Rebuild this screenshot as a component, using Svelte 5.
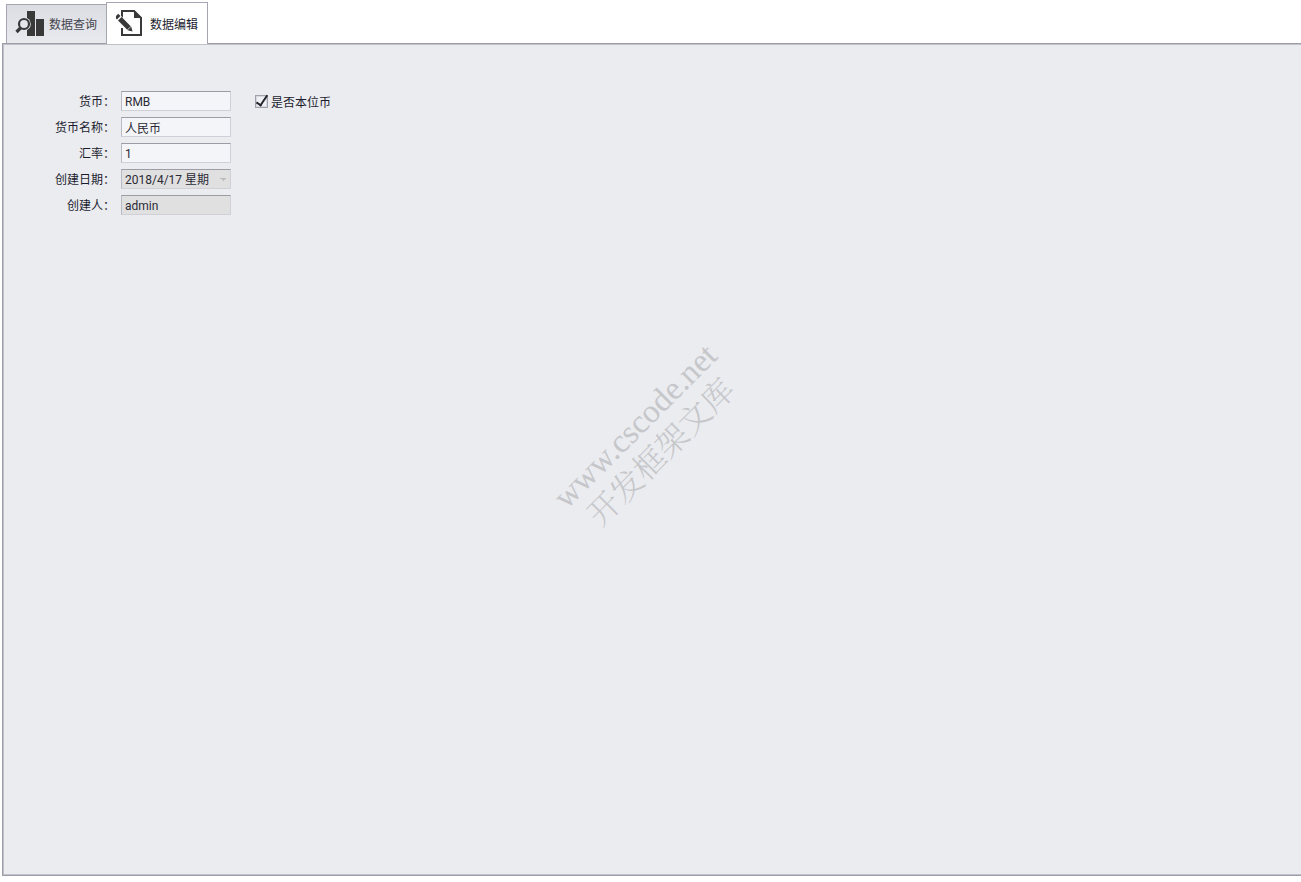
<script>
  let active = $state('edit');
  let currency = $state('RMB');
  let name = $state('人民币');
  let rate = $state('1');
  let isBase = $state(true);
</script>

<main>
  <div class="tabs" role="tablist">
    <button class="tab" class:active={active === 'query'} role="tab" aria-selected={active === 'query'} onclick={() => (active = 'query')}>
      <svg width="30" height="28" viewBox="0 0 30 28" aria-hidden="true">
        <path d="M12 1h8v25h-8zM21 9h8v17h-8z" fill="#39393a" />
        <circle cx="9" cy="14" r="6.8" fill="#e5e6eb" />
        <circle cx="9" cy="14" r="5" fill="#e5e6eb" stroke="#39393a" stroke-width="2.2" />
        <path d="M5.5 18L1.5 22" stroke="#39393a" stroke-width="3.2" />
      </svg>
      <span>数据查询</span>
    </button>
    <button class="tab" class:active={active === 'edit'} role="tab" aria-selected={active === 'edit'} onclick={() => (active = 'edit')}>
      <svg width="30" height="28" viewBox="0 0 30 28" aria-hidden="true">
        <path d="M6 8V1h12l7 7v17H6v-7" fill="none" stroke="#39393a" stroke-width="2" />
        <path d="M18 0v8h8z" fill="#39393a" />
        <path d="M2 7L14 19" stroke="#fff" stroke-width="6" />
        <path d="M3.800 8.800L13 18" stroke="#39393a" stroke-width="5" />
        <path d="M0.500 5.500L2.700 7.700" stroke="#39393a" stroke-width="5" />
        <path d="M15.200 16.600l1.300 5-5-1.300z" fill="#39393a" />
      </svg>
      <span>数据编辑</span>
    </button>
  </div>

  <section class="panel">
    <form>
      <label for="currency">货币：</label>
      <input id="currency" class="field" type="text" bind:value={currency} />
      <label class="check"><input type="checkbox" bind:checked={isBase} /><span>是否本位币</span></label>

      <label for="name">货币名称：</label>
      <input id="name" class="field" type="text" bind:value={name} />

      <label for="rate">汇率：</label>
      <input id="rate" class="field" type="text" bind:value={rate} />

      <label for="created">创建日期：</label>
      <select id="created" class="field" disabled>
        <option>2018/4/17 星期</option>
      </select>

      <label for="creator">创建人：</label>
      <input id="creator" class="field" type="text" value="admin" disabled />
    </form>
  </section>

  <div class="watermark" aria-hidden="true">
    <span class="site">www.cscode.net</span>
    <span>开发框架文库</span>
  </div>
</main>

<style>
  :global(body) {
    margin: 0;
    background: #fff;
  }
  main {
    position: relative;
    box-sizing: border-box;
    display: flex;
    flex-direction: column;
    min-height: 100vh;
    padding: 2px 0 6px 2px;
    overflow: hidden;
    color: #1c1c2e;
    font: 12px/18px Roboto, "Noto Sans CJK SC", sans-serif;
  }
  .tabs {
    display: flex;
    align-items: flex-end;
    height: 41px;
    padding-left: 4px;
  }
  .tab {
    box-sizing: border-box;
    display: flex;
    align-items: center;
    gap: 4px;
    height: 39px;
    padding: 0 9px 0 8px;
    border: 1px solid #a5a6b1;
    border-right: 0;
    border-bottom: 0;
    background: linear-gradient(#dcdde3, #e9eaee);
    color: #45454f;
    font: inherit;
  }
  .tab.active {
    position: relative;
    height: 42px;
    margin-bottom: -1px;
    border-right: 1px solid #a5a6b1;
    padding: 0 9px;
    background: #fff;
    color: #1c1c2e;
  }
  .tab svg {
    flex: none;
  }
  .tab span {
    padding-top: 2px;
  }
  .panel {
    flex: 1;
    border: 1px solid #9d9ea7;
    border-right: 0;
    background: #ebecf0;
    box-shadow: inset 1px 1px #bfc0c8, inset 0 -1px #bfc0c8;
  }
  form {
    display: grid;
    grid-template-columns: 112px 110px auto;
    grid-auto-rows: 20px;
    row-gap: 6px;
    column-gap: 6px;
    justify-content: start;
    align-items: center;
    padding-top: 47px;
  }
  form > label {
    grid-column: 1;
    padding-top: 2px;
    text-align: right;
    white-space: nowrap;
  }
  form > .check {
    grid-column: 3;
    display: flex;
    align-items: center;
    gap: 3px;
    margin-left: 18px;
    padding: 0;
  }
  .check span {
    padding-top: 4px;
  }
  .field {
    box-sizing: border-box;
    grid-column: 2;
    width: 100%;
    height: 20px;
    margin: 0;
    padding: 1px 3px 0;
    border: 1px solid #cfd0d8;
    border-top-color: #9b9ca5;
    border-left-color: #b9bac4;
    border-radius: 0;
    background: #f4f5f8;
    color: #2a2a35;
    font: inherit;
  }
  .field:disabled {
    background-color: #e0e0e1;
    opacity: 1;
  }
  select.field {
    appearance: none;
    background-image: linear-gradient(135deg, #bcbcc0 50%, transparent 50%), linear-gradient(225deg, #bcbcc0 50%, transparent 50%);
    background-repeat: no-repeat;
    background-size: 3px 3px;
    background-position: right 4px top 8px, right 7px top 8px;
  }
  .check input {
    appearance: none;
    box-sizing: border-box;
    width: 13px;
    height: 13px;
    margin: 0;
    border: 1px solid #a0a1aa;
    background: #f0f1f5;
    box-shadow: inset 0 0 0 1px #d6d7df;
  }
  .check input:checked::after {
    content: "";
    display: block;
    box-sizing: border-box;
    width: 6px;
    height: 13px;
    margin: -3px 0 0 3px;
    border: solid #24242c;
    border-width: 0 2px 2px 0;
    transform: rotate(34deg);
  }
  .watermark {
    position: absolute;
    top: calc(50% - 3px);
    left: calc(50% - 4px);
    display: grid;
    justify-items: center;
    color: #c6c7ca;
    font: 32px/34px "Noto Serif CJK SC", "Noto Sans CJK SC", serif;
    font-weight: 300;
    white-space: nowrap;
    pointer-events: none;
    transform: translate(-50%, -50%) rotate(-45deg);
  }
  .site {
    font-family: "Liberation Serif", serif;
    font-size: 33px;
  }
</style>
